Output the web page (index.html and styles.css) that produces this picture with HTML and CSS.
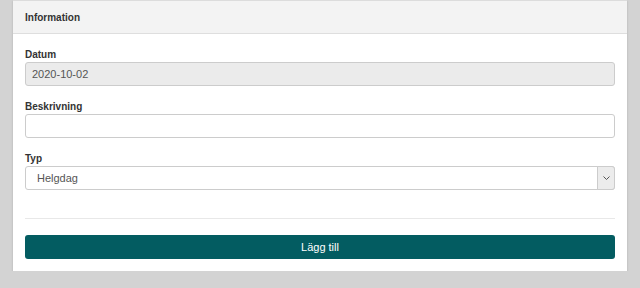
FILE: index.html
```html
<!DOCTYPE html>
<html lang="sv">
<head>
    <meta charset="UTF-8">
    <meta name="viewport" content="width=device-width, initial-scale=1.0">
    <title>Information</title>
    <link rel="stylesheet" href="styles.css">
</head>
<body>
    <div class="card">
        <div class="card-header">Information</div>
        <form class="card-body">
            <div class="form-group">
                <label for="datum">Datum</label>
                <input type="text" id="datum" class="form-control" value="2020-10-02" disabled>
            </div>
            <div class="form-group">
                <label for="beskrivning">Beskrivning</label>
                <input type="text" id="beskrivning" class="form-control">
            </div>
            <div class="form-group">
                <label for="typ">Typ</label>
                <div class="select-wrap">
                    <select id="typ" class="form-control select">
                        <option>Helgdag</option>
                        <option>Halvdag</option>
                        <option>Klämdag</option>
                    </select>
                    <span class="select-arrow">
                        <svg width="7" height="4" viewBox="0 0 7 4"><path d="M0.5 0.5 L3.5 3.5 L6.5 0.5" fill="none" stroke="#555" stroke-width="1"/></svg>
                    </span>
                </div>
            </div>
            <hr class="divider">
            <button type="button" class="btn">Lägg till</button>
        </form>
    </div>
</body>
</html>
```

FILE: styles.css
```css
* {
    margin: 0;
    padding: 0;
    box-sizing: border-box;
}

body {
    font-family: "Liberation Sans", Arial, sans-serif;
    background-color: #d3d3d3;
    color: #333;
    padding: 0 13px;
}

.card {
    background: #fff;
    border-top: 1px solid #dcdcdc;
    box-shadow: 0 1px 2px rgba(0, 0, 0, 0.18);
}

.card-header {
    background: #f3f3f3;
    border-bottom: 1px solid #dedede;
    height: 33px;
    padding: 1px 12px 0;
    font-size: 10px;
    font-weight: bold;
    line-height: 32px;
}

.card-body {
    padding: 14px 12px 12px;
}

.form-group {
    margin-bottom: 14px;
}

label {
    display: block;
    font-size: 10px;
    font-weight: bold;
    line-height: 14px;
    color: #333;
}

.form-control {
    display: block;
    width: 100%;
    height: 24px;
    border: 1px solid #cccccc;
    border-radius: 3px;
    background: #fff;
    font-family: inherit;
    font-size: 11px;
    color: #555;
    padding: 0 6px;
}

.form-control:disabled {
    background: #ebebeb;
    color: #555;
}

.select-wrap {
    position: relative;
}

.select {
    appearance: none;
    -webkit-appearance: none;
    padding-left: 11px;
}

.select-arrow {
    position: absolute;
    top: 0;
    right: 0;
    width: 18px;
    height: 24px;
    border: 1px solid #cccccc;
    border-radius: 0 3px 3px 0;
    background: #ececec;
    display: flex;
    align-items: center;
    justify-content: center;
    pointer-events: none;
}

.divider {
    border: none;
    border-top: 1px solid #e8e8e8;
    margin: 28px 0 16px;
}

.btn {
    display: block;
    width: 100%;
    height: 24px;
    border: none;
    border-radius: 3px;
    background: #035c61;
    color: #fff;
    font-family: inherit;
    font-size: 11px;
    cursor: pointer;
}
```
